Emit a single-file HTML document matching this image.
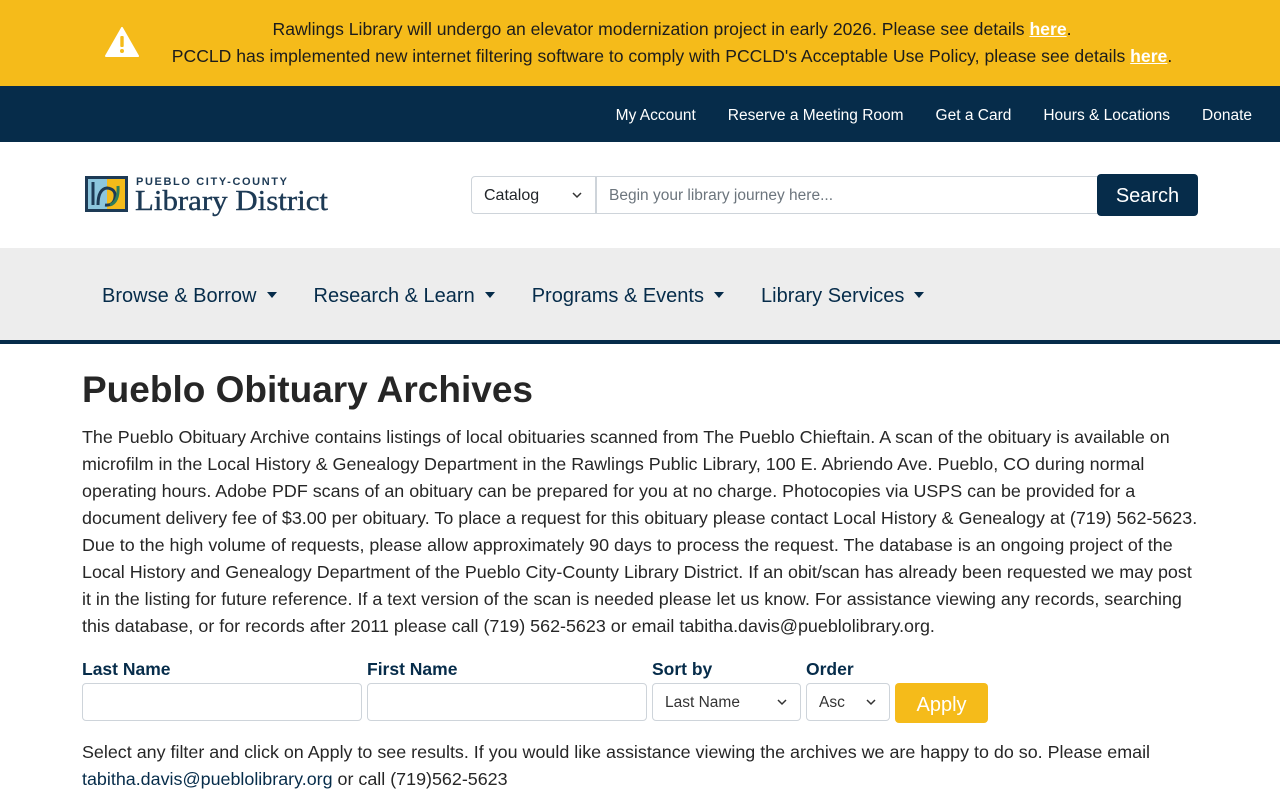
<!DOCTYPE html>
<html><head><meta charset="utf-8"><style>
*{box-sizing:border-box;margin:0;padding:0}
body{width:1280px;height:800px;overflow:hidden;font-family:"Liberation Sans",sans-serif;color:#212529;background:#fff}
.alert{background:#f5bb1a;height:86px;position:relative;text-align:center;color:#1c1c1c;font-size:17.6px;line-height:27px;padding-top:16px;padding-left:64px}
.alert a{color:#fff;font-weight:bold;text-decoration:underline}
.alert svg{position:absolute;left:105px;top:27px}
.top{background:#062c4a;height:56px;display:flex;justify-content:flex-end;align-items:center;padding-right:28px;padding-top:4px}
.top a{color:#fff;font-size:15.5px;margin-left:32px;text-decoration:none}
.head{height:106px;position:relative}
.logo{position:absolute;left:84px;top:175px}
.sel{position:absolute;left:471px;top:176px;width:125px;height:38px;border:1px solid #ced4da;border-radius:4px 0 0 4px;font-size:16px;padding:10px 12px;color:#212529}
.inp{position:absolute;left:596px;top:176px;width:502px;height:38px;border:1px solid #ced4da;font-size:15.5px;padding:10px 12px;color:#6c757d}
.btn{position:absolute;left:1097px;top:174px;width:101px;height:42px;background:#062c4a;color:#fff;border-radius:4px;font-size:20px;text-align:center;line-height:44px}
.nav{background:#ededed;height:96px;border-bottom:4px solid #062c4a;display:flex;align-items:center;padding-left:102px;padding-top:4px}
.nav span{font-size:20px;color:#062c4a;margin-right:37px}
.nav span:after{content:"";display:inline-block;margin-left:10px;vertical-align:4px;border-top:6px solid #062c4a;border-left:5.5px solid transparent;border-right:5.5px solid transparent}
.main{padding:24px 82px 0}
h1{font-size:37px;font-weight:bold;color:#262626;line-height:44px;margin-bottom:12px}
p{font-size:17.9px;line-height:27px;color:#262626}
.form{position:relative;height:99px}
.form label{position:absolute;top:19px;font-weight:bold;font-size:17.5px;color:#062c4a}
.f{position:absolute;top:43px;height:38px;border:1px solid #ced4da;border-radius:4px;font-size:15.5px;padding:10px 12px;color:#333}
.apply{position:absolute;left:813px;top:43px;width:93px;height:40px;background:#f5bb1a;color:#fff;border-radius:4px;font-size:20px;text-align:center;line-height:44px}
.chev{position:absolute;right:12px;top:12px}
a.u{color:#062c4a}
</style></head><body>
<div class="alert">
<svg width="34" height="30" viewBox="0 0 34 30"><path d="M17 1 L33 29 H1 Z" fill="#fff" stroke="#fff" stroke-linejoin="round" stroke-width="2"/><rect x="15.3" y="9" width="3.4" height="11" rx="1" fill="#f5bb1a"/><circle cx="17" cy="24" r="2" fill="#f5bb1a"/></svg>
Rawlings Library will undergo an elevator modernization project in early 2026. Please see details <a>here</a>.<br>
PCCLD has implemented new internet filtering software to comply with PCCLD's Acceptable Use Policy, please see details <a>here</a>.
</div>
<div class="top"><a>My Account</a><a>Reserve a Meeting Room</a><a>Get a Card</a><a>Hours &amp; Locations</a><a>Donate</a></div>
<div class="head"></div>
<div class="logo"><svg width="250" height="42" viewBox="0 0 250 42">
<rect x="1" y="1" width="43" height="36" fill="#1d3a55"/><rect x="4" y="4" width="19" height="30" fill="#8dc6dd"/><rect x="23" y="4" width="18" height="30" fill="#f5bb1a"/>
<path d="M9 7 V30 M14 30 Q14 14 23 13 Q32 14 31 22 Q30 31 21 30" stroke="#1d3a55" stroke-width="3" fill="none"/>
<path d="M26 30 Q35 27 34 11" stroke="#2e7d5b" stroke-width="3" fill="none"/>
<text x="52" y="10" font-family="Liberation Sans" font-weight="bold" font-size="11" fill="#1d3a55" letter-spacing="1" textLength="152">PUEBLO CITY-COUNTY</text>
<text x="51" y="35" font-family="Liberation Serif" font-size="29" fill="#1d3a55" stroke="#1d3a55" stroke-width="0.4" textLength="193" lengthAdjust="spacingAndGlyphs">Library District</text></svg></div>
<div class="sel">Catalog<svg class="chev" width="12" height="12" viewBox="0 0 12 12"><path d="M2 4 L6 8 L10 4" stroke="#333" stroke-width="1.5" fill="none"/></svg></div>
<div class="inp">Begin your library journey here...</div>
<div class="btn">Search</div>
<div class="nav"><span>Browse &amp; Borrow</span><span>Research &amp; Learn</span><span>Programs &amp; Events</span><span>Library Services</span></div>
<div class="main">
<h1>Pueblo Obituary Archives</h1>
<p>The Pueblo Obituary Archive contains listings of local obituaries scanned from The Pueblo Chieftain. A scan of the obituary is available on microfilm in the Local History &amp; Genealogy Department in the Rawlings Public Library, 100 E. Abriendo Ave. Pueblo, CO during normal operating hours. Adobe PDF scans of an obituary can be prepared for you at no charge. Photocopies via USPS can be provided for a document delivery fee of $3.00 per obituary. To place a request for this obituary please contact Local History &amp; Genealogy at (719) 562-5623. Due to the high volume of requests, please allow approximately 90 days to process the request. The database is an ongoing project of the Local History and Genealogy Department of the Pueblo City-County Library District. If an obit/scan has already been requested we may post it in the listing for future reference. If a text version of the scan is needed please let us know. For assistance viewing any records, searching this database, or for records after 2011 please call (719) 562-5623 or email tabitha.davis@pueblolibrary.org.</p>
<div class="form">
<label style="left:0">Last Name</label><label style="left:285px">First Name</label><label style="left:570px">Sort by</label><label style="left:724px">Order</label>
<div class="f" style="left:0;width:280px"></div><div class="f" style="left:285px;width:280px"></div>
<div class="f" style="left:570px;width:149px">Last Name<svg class="chev" width="12" height="12" viewBox="0 0 12 12"><path d="M2 4 L6 8 L10 4" stroke="#333" stroke-width="1.5" fill="none"/></svg></div>
<div class="f" style="left:724px;width:84px">Asc<svg class="chev" width="12" height="12" viewBox="0 0 12 12"><path d="M2 4 L6 8 L10 4" stroke="#333" stroke-width="1.5" fill="none"/></svg></div>
<div class="apply">Apply</div>
</div>
<p>Select any filter and click on Apply to see results. If you would like assistance viewing the archives we are happy to do so. Please email <a class="u">tabitha.davis@pueblolibrary.org</a> or call (719)562-5623</p>
</div>
</body></html>
